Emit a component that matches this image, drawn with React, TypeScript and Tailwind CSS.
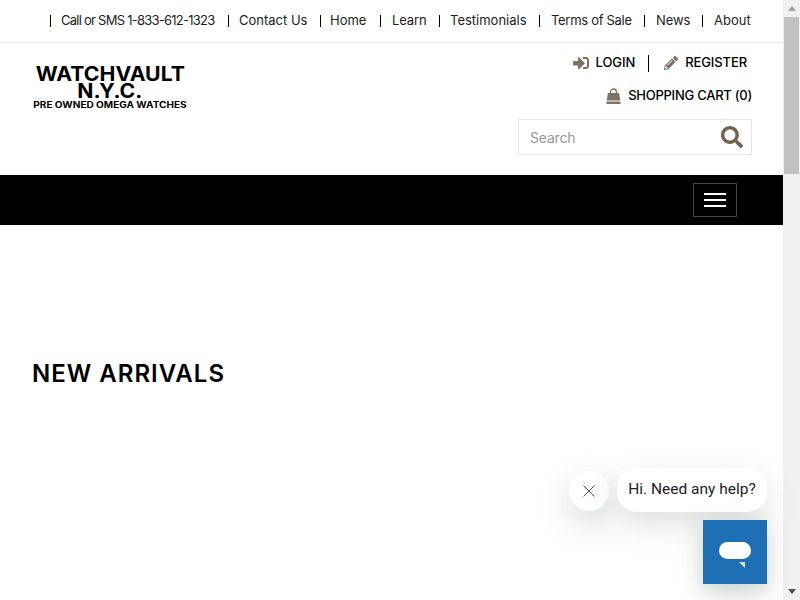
import { FaPencilAlt, FaSearch, FaSignInAlt } from 'react-icons/fa'

const topLinks = [
  { label: 'Call or SMS 1-833-612-1323', className: 'w-[178px] pl-[10px] tracking-[-0.75px]' },
  { label: 'Contact Us', className: 'w-[92px] pl-[10px]' },
  { label: 'Home', className: 'w-[60px] pl-[9px]' },
  { label: 'Learn', className: 'w-[59px] pl-[11px] tracking-[-0.1px]' },
  { label: 'Testimonials', className: 'w-[100px] pl-[10px]' },
  { label: 'Terms of Sale', className: 'w-[105px] pl-[11px] tracking-[-0.3px]' },
  { label: 'News', className: 'w-[58px] pl-[11px] tracking-[-0.1px]' },
  { label: 'About', className: 'w-[48px] pl-[11px]' },
]

function BagIcon() {
  return (
    <svg width="17" height="17" viewBox="0 0 17 17" className="mr-[6px]">
      <path d="M5.500 6V4.200C5.500 2.400 6.800 1 8.500 1s3 1.400 3 3.200V6" fill="none" stroke="#7f7265" strokeWidth="1.3" />
      <path d="M3 5h11l1.300 7.500H1.700z" fill="#7f7265" />
      <path d="M1.500 13.500h14V16h-14z" fill="#7f7265" />
    </svg>
  )
}

function Scrollbar() {
  return (
    <aside className="w-[17px] shrink-0 h-[600px] bg-[#f1f1f1] flex flex-col items-center">
      <div className="h-[17px] w-full flex items-center justify-center">
        <div className="w-0 h-0 border-x-[4px] border-x-transparent border-b-[5px] border-b-[#a3a3a3]" />
      </div>
      <div className="w-[15px] h-[157px] bg-[#c1c1c1]" />
      <div className="flex-1" />
      <div className="h-[17px] w-full flex items-center justify-center">
        <div className="w-0 h-0 border-x-[4px] border-x-transparent border-t-[5px] border-t-[#505050]" />
      </div>
    </aside>
  )
}

function ChatWidget() {
  return (
    <div className="absolute left-[569px] top-[468px] w-[198px] h-[116px]">
      <div className="absolute left-0 top-[3px] w-[40px] h-[40px] rounded-full bg-white flex items-center justify-center shadow-[0_12px_32px_rgba(60,80,80,0.22)]">
        <svg width="14" height="14" viewBox="0 0 14 14" fill="none">
          <path d="M1.500 1.500l11 11M12.500 1.500l-11 11" stroke="#444" strokeWidth="0.9" />
        </svg>
      </div>
      <div className="absolute left-[48px] top-0 w-[150px] h-[44px] rounded-[20px] bg-white flex items-center justify-center text-[15.500px] text-[#222] font-['Roboto',sans-serif] shadow-[0_12px_32px_rgba(60,80,80,0.18)]">
        Hi. Need any help?
      </div>
      <div className="absolute left-[134px] top-[52px] w-[64px] h-[64px] bg-[#1f6fb4] flex items-center justify-center shadow-[0_8px_24px_rgba(40,60,60,0.25)]">
        <svg width="34" height="32" viewBox="0 0 34 32" fill="none">
          <rect x="1" y="6" width="32" height="17" rx="8.500" fill="#fff" />
          <path d="M21 26h6v6z" fill="#d8e6f2" />
        </svg>
      </div>
    </div>
  )
}

export default function App() {
  return (
    <div className="relative flex h-[600px] w-[800px] overflow-hidden bg-white text-black font-['Inter',sans-serif]">
      <main className="flex-1 min-w-0">
        <nav className="h-[43px] border-b border-[#e8e8e8] pl-[50px] flex items-center">
          {topLinks.map((link) => (
            <div key={link.label} className={`${link.className} shrink-0 flex items-center h-[12px] border-l border-black text-[13px] text-[#222] whitespace-nowrap`}>
              {link.label}
            </div>
          ))}
        </nav>

        <header className="h-[132px] pl-[32px] pr-[31px] flex justify-between">
          <div className="pt-[23px] w-[156px] flex flex-col items-center leading-none whitespace-nowrap font-bold">
            <div className="text-[19.500px] leading-[17px] scale-x-[1.09]">WATCHVAULT</div>
            <div className="text-[19.500px] leading-[16px] scale-x-[1.09]">N.Y.C.</div>
            <div className="text-[8.500px] leading-[10px] mt-[1px] scale-x-[1.18]">PRE OWNED OMEGA WATCHES</div>
          </div>

          <div className="w-[234px] flex flex-col items-end pt-[11px]">
            <div className="flex items-center h-[18px] pr-[5px] text-[13px] font-medium tracking-[-0.1px]">
              <FaSignInAlt className="text-[#7f7265] w-[16px] h-[16px] mr-[7px]" />
              LOGIN
              <span className="h-[17px] border-l border-black ml-[13px] mr-[15px]" />
              <FaPencilAlt className="text-[#7f7265] w-[14px] h-[14px] mr-[7px]" />
              REGISTER
            </div>
            <div className="flex items-center mt-[15px] h-[18px] text-[13px] font-medium tracking-[-0.25px]">
              <BagIcon />
              SHOPPING CART (0)
            </div>
            <div className="mt-[14px] w-[234px] h-[36px] border border-[#e6e6e6] flex items-center justify-between pl-[11px] pr-[8px]">
              <span className="text-[14px] tracking-[-0.2px] text-[#999]">Search</span>
              <FaSearch className="text-[#70644f] w-[22px] h-[22px]" />
            </div>
          </div>
        </header>

        <div className="h-[50px] bg-black pr-[46px] flex items-center justify-end">
          <div className="w-[44px] h-[34px] border border-[#444] flex flex-col items-center justify-center gap-[4px]">
            <span className="w-[22px] h-[2px] bg-white" />
            <span className="w-[22px] h-[2px] bg-white" />
            <span className="w-[22px] h-[2px] bg-white" />
          </div>
        </div>

        <h2 className="mt-[134px] pl-[32px] text-[24px] leading-[30px] font-semibold tracking-[1px]">NEW ARRIVALS</h2>
      </main>

      <Scrollbar />
      <ChatWidget />
    </div>
  )
}
